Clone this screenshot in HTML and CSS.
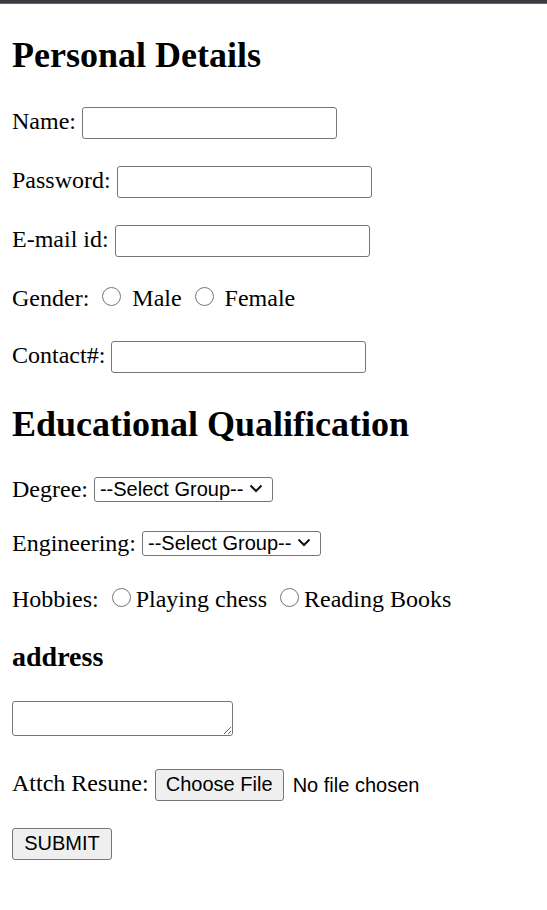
FILE: index.html
```html
<!DOCTYPE html>
<html lang="en">
<head>
<meta charset="utf-8">
<title>Registration Form</title>
<link rel="stylesheet" href="styles.css">
</head>
<body>
<div class="topbar"></div>
<form class="page">
  <h2 class="section-title">Personal Details</h2>
  <p class="row">Name: <input class="field" type="text"></p>
  <p class="row">Password: <input class="field" type="password"></p>
  <p class="row">E-mail id: <input class="field" type="text"></p>
  <p class="row row-gender">Gender: <input class="radio" type="radio" name="g"> Male <input class="radio" type="radio" name="g"> Female</p>
  <p class="row row-contact">Contact#: <input class="field" type="text"></p>
  <h2 class="section-title">Educational Qualification</h2>
  <p class="row row-select row-deg">Degree: <span class="select-wrap"><select class="choice"><option>--Select Group--</option></select><svg class="chev" width="14" height="9" viewBox="0 0 14 9"><path d="M1.5 1.5 L7 7 L12.5 1.5" fill="none" stroke="#111" stroke-width="2"/></svg></span></p>
  <p class="row row-select row-eng">Engineering: <span class="select-wrap"><select class="choice"><option>--Select Group--</option></select><svg class="chev" width="14" height="9" viewBox="0 0 14 9"><path d="M1.5 1.5 L7 7 L12.5 1.5" fill="none" stroke="#111" stroke-width="2"/></svg></span></p>
  <p class="row row-hobby">Hobbies: <input class="radio" type="radio" name="h">Playing chess <input class="radio" type="radio" name="h">Reading Books</p>
  <h3 class="sub-title">address</h3>
  <p class="row row-area"><textarea class="area"></textarea></p>
  <p class="row row-file">Attch Resune: <input class="file" type="file"></p>
  <p class="row"><button class="submit" type="button">SUBMIT</button></p>
</form>
</body>
</html>
```
FILE: styles.css
```css
html, body {
  margin: 0;
  padding: 0;
  background: #ffffff;
}
body {
  font-family: "Liberation Serif", "Times New Roman", serif;
  font-size: 24px;
  color: #000;
}
.topbar {
  height: 3px;
  background: #3b3b41;
  border-bottom: 1px solid #6a6a6e;
}
.page {
  margin: 0 12px;
  padding: 0;
}
.section-title {
  font-size: 36px;
  font-weight: bold;
  margin: 30px 0 28px;
}
.sub-title {
  font-size: 28px;
  font-weight: bold;
  margin: 27px 0 28px;
}
.row {
  margin: 24px 0;
  line-height: 35px;
}
.row-gender {
  margin-bottom: 22px;
}
.row-contact {
  margin-top: 22px;
}
.row-select {
  line-height: 30px;
}
.row-deg {
  margin-bottom: 23px;
}
.row-eng {
  margin-top: 23px;
}
.row-hobby {
  line-height: 30px;
  margin-top: 26px;
}
.row-area {
  line-height: normal;
}
.row-file {
  margin-top: 30px;
}
.field {
  box-sizing: border-box;
  width: 255px;
  height: 32px;
  padding: 0 3px;
  border: 1px solid #767676;
  border-radius: 3px;
  font-family: "Liberation Sans", Arial, sans-serif;
  font-size: 20px;
  background: #fff;
  vertical-align: baseline;
}
.radio {
  width: 19px;
  height: 19px;
  margin: 0 5px 0 7px;
  vertical-align: baseline;
}
.select-wrap {
  position: relative;
  display: inline-block;
  vertical-align: 1px;
}
.choice {
  -webkit-appearance: none;
  appearance: none;
  box-sizing: border-box;
  width: 179px;
  height: 25px;
  font-family: "Liberation Sans", Arial, sans-serif;
  font-size: 20px;
  line-height: 23px;
  border: 1px solid #767676;
  border-radius: 3px;
  background: #fff;
  color: #000;
  padding: 0 0 0 5px;
  margin: 0;
}
.chev {
  position: absolute;
  right: 10px;
  top: 50%;
  margin-top: -4px;
  pointer-events: none;
}
.area {
  box-sizing: border-box;
  width: 221px;
  height: 35px;
  border: 1px solid #767676;
  border-radius: 3px;
  font-family: "Liberation Mono", monospace;
  font-size: 20px;
  margin: 0;
  vertical-align: bottom;
}
.file {
  font-family: "Liberation Sans", Arial, sans-serif;
  font-size: 20px;
  color: #000;
}
.file::file-selector-button {
  box-sizing: border-box;
  height: 32px;
  width: 129px;
  margin: 0 9px 0 0;
  padding: 0 10px;
  font-family: "Liberation Sans", Arial, sans-serif;
  font-size: 20px;
  color: #000;
  background: #efefef;
  border: 1px solid #767676;
  border-radius: 3px;
}
.submit {
  box-sizing: border-box;
  width: 100px;
  height: 32px;
  padding: 0;
  font-family: "Liberation Sans", Arial, sans-serif;
  font-size: 20px;
  color: #000;
  background: #efefef;
  border: 1px solid #767676;
  border-radius: 3px;
}
```
